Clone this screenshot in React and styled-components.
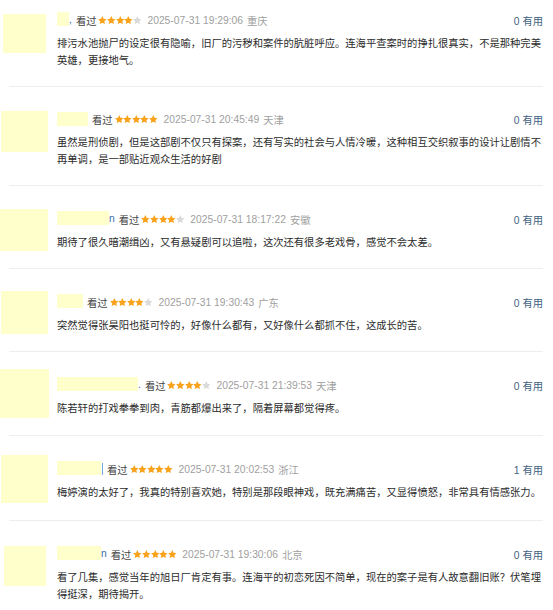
import React from 'react'
import styled, { createGlobalStyle } from 'styled-components'

const reviews = [
  { avatar: { w: 43, h: 39, x: 3, y: 2 }, name: 12, tail: ',', stars: 4, time: '2025-07-31 19:29:06', place: '重庆', useful: 0,
    text: '排污水池抛尸的设定很有隐喻，旧厂的污秽和案件的肮脏呼应。连海平查案时的挣扎很真实，不是那种完美英雄，更接地气。' },
  { avatar: { w: 47, h: 41, x: 1, y: -1 }, name: 31, tail: '', stars: 5, time: '2025-07-31 20:45:49', place: '天津', useful: 0,
    text: '虽然是刑侦剧，但是这部剧不仅只有探案，还有写实的社会与人情冷暖，这种相互交织叙事的设计让剧情不再单调，是一部贴近观众生活的好剧' },
  { avatar: { w: 48, h: 42, x: 0, y: -2 }, name: 52, tail: 'n', stars: 4, time: '2025-07-31 18:17:22', place: '安徽', useful: 0,
    text: '期待了很久暗潮缉凶，又有悬疑剧可以追啦，这次还有很多老戏骨，感觉不会太差。' },
  { avatar: { w: 47, h: 43, x: 1, y: -3 }, name: 26, tail: '', stars: 4, time: '2025-07-31 19:30:43', place: '广东', useful: 0,
    text: '突然觉得张昊阳也挺可怜的，好像什么都有，又好像什么都抓不住，这成长的苦。' },
  { avatar: { w: 49, h: 49, x: 0, y: -8 }, name: 81, tail: '.', stars: 4, time: '2025-07-31 21:39:53', place: '天津', useful: 0,
    text: '陈若轩的打戏拳拳到肉，青筋都爆出来了，隔着屏幕都觉得疼。' },
  { avatar: { w: 47, h: 48, x: 1, y: -6 }, name: 44, tail: '|', stars: 5, time: '2025-07-31 20:02:53', place: '浙江', useful: 1,
    text: '梅婷演的太好了，我真的特别喜欢她，特别是那段眼神戏，既充满痛苦，又显得愤怒，非常具有情感张力。' },
  { avatar: { w: 42, h: 40, x: 4, y: 0 }, name: 44, tail: 'n', stars: 5, time: '2025-07-31 19:30:06', place: '北京', useful: 0,
    text: '看了几集，感觉当年的旭日厂肯定有事。连海平的初恋死因不简单，现在的案子是有人故意翻旧账？伏笔埋得挺深，期待揭开。' },
]

export default function App() {
  return (
    <>
      <Global />
      <List>
        {reviews.map((r, i) => (
          <React.Fragment key={i}>
            {i > 0 && <Divider />}
            <Item $first={i === 0}>
              <AvatarSlot>
                <Avatar $w={r.avatar.w} $h={r.avatar.h} $x={r.avatar.x} $y={r.avatar.y} />
              </AvatarSlot>
              <Body>
                <Meta>
                  <Who>
                    <NameBox $w={r.name} />
                    {r.tail && <Tail $bar={r.tail === '|'}>{r.tail === '|' ? '' : r.tail}</Tail>}
                  </Who>
                  <Watched>看过</Watched>
                  <Stars>
                    {[0, 1, 2, 3, 4].map(k => (
                      <Star key={k} viewBox="1.6 1.6 20.8 20.8" $on={k < r.stars}>
                        <path d="M12 1.8l3.1 6.5 7 .9-5.1 4.9 1.3 7L12 17.7l-6.3 3.4 1.3-7L1.9 9.2l7-.9z" />
                      </Star>
                    ))}
                  </Stars>
                  <Time>{r.time}</Time>
                  <Place>{r.place}</Place>
                  <Useful>{r.useful} 有用</Useful>
                </Meta>
                <Text>{r.text}</Text>
              </Body>
            </Item>
          </React.Fragment>
        ))}
      </List>
    </>
  )
}

const Global = createGlobalStyle`
  body {
    margin: 0;
    background: #fff;
    font-family: "Liberation Sans", "Noto Sans CJK SC", sans-serif;
  }
`

const List = styled.div`
  width: 553px;
  display: flex;
  flex-direction: column;
`

const Divider = styled.div`
  height: 1px;
  margin: 0 10px 0 9px;
  background: #ededed;
`

const Item = styled.div`
  display: flex;
  align-items: flex-start;
  padding: ${p => (p.$first ? '12px' : '25px')} 10px 17px 0;
`

const AvatarSlot = styled.div`
  width: 57px;
  flex-shrink: 0;
`

const Avatar = styled.div`
  width: ${p => p.$w}px;
  height: ${p => p.$h}px;
  margin-left: ${p => p.$x}px;
  margin-top: ${p => p.$y}px;
  background: #ffffcc;
`

const Body = styled.div`
  flex: 1;
  min-width: 0;
`

const Meta = styled.div`
  display: flex;
  align-items: center;
  height: 16px;
  font-size: 10.3px;
  white-space: nowrap;
`

const Who = styled.div`
  display: flex;
  align-items: flex-end;
  margin-right: 4px;
`

const NameBox = styled.div`
  width: ${p => p.$w}px;
  height: 14px;
  margin-top: -2px;
  background: #ffffcc;
`

const Tail = styled.span`
  color: #3b6ea8;
  font-size: 10.3px;
  line-height: 12px;
  ${p => p.$bar && `
    width: 1px;
    height: 12px;
    margin-left: 1px;
    background: #6ea7dd;
  `}
`

const Watched = styled.span`
  color: #444;
  margin-right: 2px;
`

const Stars = styled.span`
  display: flex;
  align-items: center;
  margin-right: 6px;
`

const Star = styled.svg`
  width: 8.6px;
  height: 8.6px;
  fill: ${p => (p.$on ? '#f9a21b' : '#dadada')};
`

const Time = styled.span`
  color: #a0a0a0;
  margin-right: 4px;
`

const Place = styled.span`
  color: #a0a0a0;
`

const Useful = styled.span`
  margin-left: auto;
  color: #3f5f7f;
`

const Text = styled.p`
  margin: 6.5px 0 0;
  font-size: 10.3px;
  line-height: 17px;
  color: #2b2b2b;
  word-break: break-all;
`
